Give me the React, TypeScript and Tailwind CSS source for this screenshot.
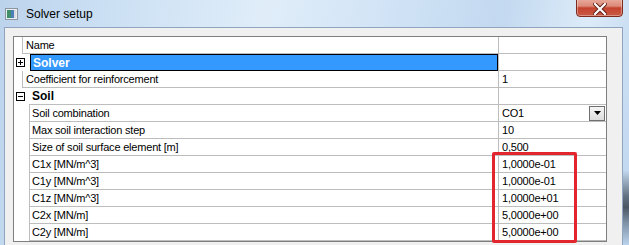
import React from "react";

const F = { fontFamily: '"Liberation Sans", Arial, sans-serif' };

function Box({ plus }: { plus: boolean }) {
  return (
    <svg width="9" height="9" viewBox="0 0 9 9" className="block">
      <rect x="0.5" y="0.5" width="8" height="8" fill="#fff" stroke="#000" />
      <line x1="2" y1="4.5" x2="7" y2="4.5" stroke="#000" />
      {plus && <line x1="4.5" y1="2" x2="4.5" y2="7" stroke="#000" />}
    </svg>
  );
}

const txt = "text-[11px] tracking-[-0.2px] text-black leading-none";

function TopRow({ name, value }: { name: string; value: string }) {
  return (
    <div className="flex h-[17px]">
      <div className="w-[8px] shrink-0" />
      <div className={`flex-1 border-l border-b border-[#bdbdbd] pl-[3px] flex items-center ${txt}`}>{name}</div>
      <div className={`w-[108px] shrink-0 border-l border-b border-[#bdbdbd] pl-[3px] flex items-center ${txt}`}>{value}</div>
    </div>
  );
}

function ChildRow({ name, value, dropdown }: { name: string; value: string; dropdown?: boolean }) {
  return (
    <div className="flex h-[17px]">
      <div className="w-[15px] shrink-0" />
      <div className={`flex-1 border-l border-b border-[#bdbdbd] pl-[2px] flex items-center ${txt}`}>{name}</div>
      <div className={`w-[108px] shrink-0 border-l border-b border-[#bdbdbd] pl-[3px] flex items-center justify-between ${txt}`}>
        <span>{value}</span>
        {dropdown && (
          <div className="w-[16px] h-[15px] mr-[1px] border border-[#707070] bg-[linear-gradient(#f6f6f6,#dcdcdc)] flex items-center justify-center">
            <svg width="7" height="4" viewBox="0 0 7 4"><polygon points="0,0 7,0 3.5,4" fill="#000" /></svg>
          </div>
        )}
      </div>
    </div>
  );
}

export default function App() {
  return (
    <div
      className="relative w-[629px] h-[245px] overflow-hidden flex flex-col bg-[linear-gradient(100deg,#bcd3ec_0%,#cadff3_15%,#e0edf9_40%,#cfe2f5_60%,#c3d9f0_75%,#dcebf8_88%,#bcd4ee_100%)]"
      style={F}
    >
      {/* Title bar */}
      <div className="h-[27px] shrink-0 flex items-center pl-[5px]">
        <svg width="13" height="12" viewBox="0 0 13 12" className="block mt-[1px]">
          <rect x="0.5" y="0.5" width="12" height="11" fill="#e8edf2" stroke="#8c96a0" />
          <rect x="2" y="2" width="4" height="8" fill="#3f8f6a" />
          <rect x="6" y="2" width="3" height="8" fill="#4a7fb8" />
          <rect x="9" y="2" width="2" height="8" fill="#d8dde2" />
        </svg>
        <span className="ml-[8px] text-[12px] text-black leading-none">Solver setup</span>
      </div>

      {/* Close button */}
      <div className="absolute left-[576px] top-[-3px] w-[47px] h-[20px] rounded-b-[4px] border border-[#7d2a1f] bg-[linear-gradient(#eab0a2_0%,#dc8a78_45%,#c5432f_55%,#c95a44_100%)] flex items-center justify-center shadow-[inset_0_0_0_1px_rgba(255,255,255,0.35)]">
        <svg width="14" height="12" viewBox="0 0 14 12" className="mt-[3px]">
          <path d="M2 1 L12 11 M12 1 L2 11" stroke="#5a1a12" strokeWidth="4" strokeLinecap="square" />
          <path d="M2 1 L12 11 M12 1 L2 11" stroke="#ffffff" strokeWidth="2.2" strokeLinecap="square" />
        </svg>
      </div>

      {/* Client area */}
      <div className="flex-1 ml-[4px] mr-[6px] border-l border-t border-r border-[#8fa5bf] bg-[#f0f0f0] pl-[8px] pt-[8px] relative">
        <div className="w-[594px] border border-[#7f7f7f] bg-white">
          {/* Name header */}
          <div className="flex h-[17px]">
            <div className="w-[8px] shrink-0" />
            <div className={`flex-1 border-l border-b border-[#bdbdbd] pl-[3px] flex items-center ${txt}`}>Name</div>
            <div className="w-[108px] shrink-0 border-l border-b border-[#bdbdbd]" />
          </div>
          {/* Solver category */}
          <div className="flex h-[17px]">
            <div className="w-[16px] shrink-0 flex items-center pl-[2px]">
              <Box plus />
            </div>
            <div className="flex-1 border border-black bg-[#3399ff] pl-[2px] flex items-center text-[12px] font-bold text-white leading-none">
              Solver
            </div>
            <div className="w-[108px] shrink-0 border-l border-b border-[#bdbdbd]" />
          </div>
          <TopRow name="Coefficient for reinforcement" value="1" />
          {/* Soil category */}
          <div className="flex h-[17px]">
            <div className="w-[15px] shrink-0 flex items-center pl-[2px]">
              <Box plus={false} />
            </div>
            <div className="flex-1 border-b border-[#bdbdbd] pl-[3px] flex items-center text-[12px] font-bold text-black leading-none">
              Soil
            </div>
            <div className="w-[108px] shrink-0 border-l border-b border-[#bdbdbd]" />
          </div>
          <ChildRow name="Soil combination" value="CO1" dropdown />
          <ChildRow name="Max soil interaction step" value="10" />
          <ChildRow name="Size of soil surface element [m]" value="0,500" />
          <ChildRow name="C1x [MN/m^3]" value="1,0000e-01" />
          <ChildRow name="C1y [MN/m^3]" value="1,0000e-01" />
          <ChildRow name="C1z [MN/m^3]" value="1,0000e+01" />
          <ChildRow name="C2x [MN/m]" value="5,0000e+00" />
          <ChildRow name="C2y [MN/m]" value="5,0000e+00" />
        </div>
      </div>

      {/* Right glass reflection */}
      <div className="absolute left-[623px] top-[170px] w-[6px] h-[75px] bg-[linear-gradient(#c5dbf1_0%,#4b5866_35%,#2f3740_50%,#6d7f92_70%,#bcd4ee_100%)] opacity-80" />

      {/* Red highlight */}
      <div className="absolute left-[492px] top-[152px] w-[85px] h-[91px] border-[3px] border-[#e3262d] rounded-[2px]" />
    </div>
  );
}
